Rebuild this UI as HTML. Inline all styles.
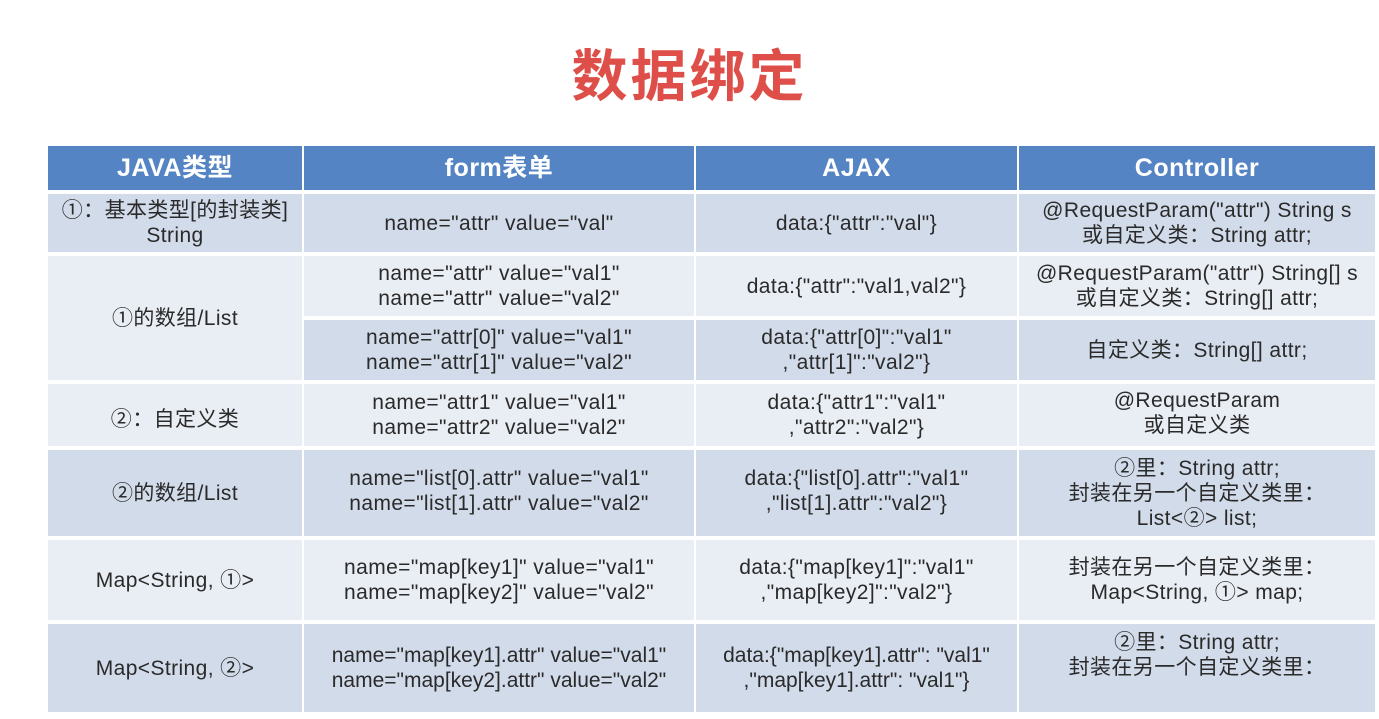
<!DOCTYPE html>
<html><head><meta charset="utf-8"><style>
body{margin:0;width:1379px;height:719px;background:#fff;position:relative;overflow:hidden;font-family:"Liberation Sans","Noto Sans CJK SC",sans-serif;}
.t{position:absolute;left:0;width:1379px;top:32px;text-align:center;font-size:56px;font-weight:bold;color:#de4f4a;letter-spacing:3px;}
.c{position:absolute;display:flex;align-items:center;justify-content:center;text-align:center;font-size:21px;letter-spacing:0.4px;line-height:25px;color:#2a2a2a;white-space:nowrap;}
.h{background:#5584c4;color:#fff;font-weight:bold;font-size:25px;letter-spacing:0.5px;}
.d{background:#d2dbea;}
.l{background:#e9edf4;}
</style></head><body>
<div class="t">数据绑定</div>

<div class="c h" style="left:48px;top:146px;width:254px;height:44px">JAVA类型</div>
<div class="c h" style="left:304px;top:146px;width:390px;height:44px">form表单</div>
<div class="c h" style="left:696px;top:146px;width:321px;height:44px">AJAX</div>
<div class="c h" style="left:1019px;top:146px;width:356px;height:44px">Controller</div>

<div class="c d" style="left:48px;top:194px;width:254px;height:58px">①：基本类型[的封装类]<br>String</div>
<div class="c d" style="left:304px;top:194px;width:390px;height:58px">name="attr" value="val"</div>
<div class="c d" style="left:696px;top:194px;width:321px;height:58px">data:{"attr":"val"}</div>
<div class="c d" style="left:1019px;top:194px;width:356px;height:58px">@RequestParam("attr") String s<br>或自定义类：String attr;</div>

<div class="c l" style="left:48px;top:256px;width:254px;height:124px">①的数组/List</div>
<div class="c l" style="left:304px;top:256px;width:390px;height:60px">name="attr" value="val1"<br>name="attr" value="val2"</div>
<div class="c l" style="left:696px;top:256px;width:321px;height:60px">data:{"attr":"val1,val2"}</div>
<div class="c l" style="left:1019px;top:256px;width:356px;height:60px">@RequestParam("attr") String[] s<br>或自定义类：String[] attr;</div>

<div class="c d" style="left:304px;top:320px;width:390px;height:60px">name="attr[0]" value="val1"<br>name="attr[1]" value="val2"</div>
<div class="c d" style="left:696px;top:320px;width:321px;height:60px">data:{"attr[0]":"val1"<br>,"attr[1]":"val2"}</div>
<div class="c d" style="left:1019px;top:320px;width:356px;height:60px">自定义类：String[] attr;</div>

<div class="c l" style="left:48px;top:384px;width:254px;height:62px;padding-top:8px;box-sizing:border-box">②：自定义类</div>
<div class="c l" style="left:304px;top:384px;width:390px;height:62px">name="attr1" value="val1"<br>name="attr2" value="val2"</div>
<div class="c l" style="left:696px;top:384px;width:321px;height:62px">data:{"attr1":"val1"<br>,"attr2":"val2"}</div>
<div class="c l" style="left:1019px;top:384px;width:356px;height:62px;align-items:flex-start;padding-top:4px;box-sizing:border-box">@RequestParam<br>或自定义类</div>

<div class="c d" style="left:48px;top:450px;width:254px;height:86px;align-items:flex-start;padding-top:31px;box-sizing:border-box">②的数组/List</div>
<div class="c d" style="left:304px;top:450px;width:390px;height:86px;align-items:flex-start;padding-top:16px;box-sizing:border-box">name="list[0].attr" value="val1"<br>name="list[1].attr" value="val2"</div>
<div class="c d" style="left:696px;top:450px;width:321px;height:86px;align-items:flex-start;padding-top:16px;box-sizing:border-box">data:{"list[0].attr":"val1"<br>,"list[1].attr":"val2"}</div>
<div class="c d" style="left:1019px;top:450px;width:356px;height:86px">②里：String attr;<br>封装在另一个自定义类里：<br>List&lt;②&gt; list;</div>

<div class="c l" style="left:48px;top:540px;width:254px;height:80px">Map&lt;String, ①&gt;</div>
<div class="c l" style="left:304px;top:540px;width:390px;height:80px">name="map[key1]" value="val1"<br>name="map[key2]" value="val2"</div>
<div class="c l" style="left:696px;top:540px;width:321px;height:80px">data:{"map[key1]":"val1"<br>,"map[key2]":"val2"}</div>
<div class="c l" style="left:1019px;top:540px;width:356px;height:80px">封装在另一个自定义类里：<br>Map&lt;String, ①&gt; map;</div>

<div class="c d" style="left:48px;top:624px;width:254px;height:88px">Map&lt;String, ②&gt;</div>
<div class="c d" style="left:304px;top:624px;width:390px;height:88px;letter-spacing:0">name="map[key1].attr" value="val1"<br>name="map[key2].attr" value="val2"</div>
<div class="c d" style="left:696px;top:624px;width:321px;height:88px;letter-spacing:0">data:{"map[key1].attr": "val1"<br>,"map[key1].attr": "val1"}</div>
<div class="c d" style="left:1019px;top:624px;width:356px;height:88px;align-items:flex-start;padding-top:6px;box-sizing:border-box">②里：String attr;<br>封装在另一个自定义类里：</div>
</body></html>
